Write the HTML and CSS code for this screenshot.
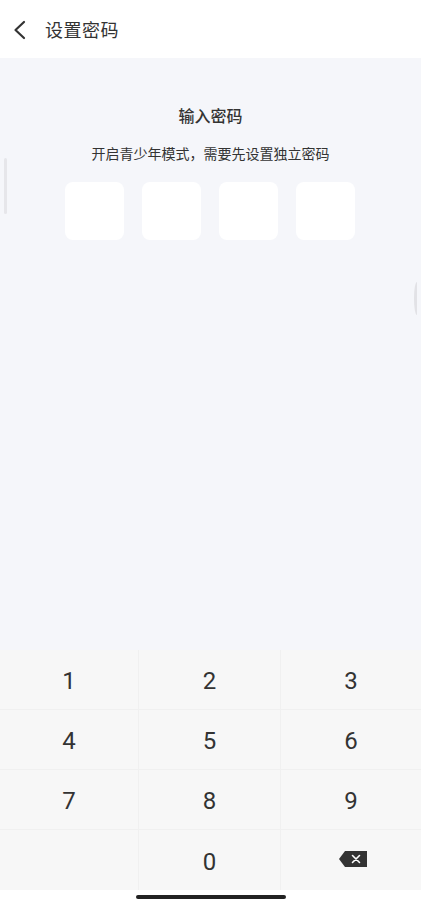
FILE: index.html
```html
<!DOCTYPE html>
<html lang="zh">
<head>
<meta charset="utf-8">
<link rel="stylesheet" href="styles.css">
</head>
<body>
<div class="page">
  <header class="topbar">
    <svg class="back" width="16" height="20" viewBox="0 0 16 20"><path d="M12 2 L3.5 10 L12 18" fill="none" stroke="#333" stroke-width="2.2" stroke-linecap="round" stroke-linejoin="round"/></svg>
    <span class="title">设置密码</span>
  </header>
  <main class="content">
    <h1 class="heading">输入密码</h1>
    <p class="sub">开启青少年模式，需要先设置独立密码</p>
    <div class="boxes">
      <div class="box"></div><div class="box"></div><div class="box"></div><div class="box"></div>
    </div>
    <div class="edge-left"></div>
    <div class="edge-right"></div>
  </main>
  <section class="keypad">
    <div class="key">1</div><div class="key">2</div><div class="key">3</div>
    <div class="key">4</div><div class="key">5</div><div class="key">6</div>
    <div class="key">7</div><div class="key">8</div><div class="key">9</div>
    <div class="key"></div><div class="key">0</div>
    <div class="key">
      <svg class="del" width="30" height="18" viewBox="0 0 30 18"><path d="M7 1 H29 V17 H7 L1 9 Z" fill="#333"/><path d="M14.5 5.5 L21.5 12.5 M21.5 5.5 L14.5 12.5" stroke="#fff" stroke-width="1.6" stroke-linecap="round"/></svg>
    </div>
  </section>
  <footer class="homebar"><div class="indicator"></div></footer>
</div>
</body>
</html>
```
FILE: styles.css
```css
html, body {
  margin: 0;
  padding: 0;
}
body {
  width: 421px;
  height: 900px;
  font-family: "Noto Sans CJK SC", "Noto Sans", sans-serif;
  color: #333;
  background: #f5f6fa;
}
.page {
  display: flex;
  flex-direction: column;
  height: 900px;
}
.topbar {
  height: 58px;
  background: #fff;
  display: flex;
  align-items: center;
  padding-left: 12px;
  box-sizing: border-box;
}
.back {
  margin-top: 1px;
}
.title {
  margin-left: 17px;
  font-size: 18px;
  color: #333;
  letter-spacing: 0.5px;
}
.content {
  position: relative;
  flex: 1;
  display: flex;
  flex-direction: column;
  align-items: center;
  background: #f5f6fa;
}
.heading {
  margin: 46px 0 0;
  font-size: 16px;
  font-weight: 500;
  line-height: 22px;
  color: #333;
}
.sub {
  margin: 17px 0 0;
  font-size: 14px;
  line-height: 20px;
  color: #333;
}
.boxes {
  display: flex;
  gap: 18px;
  margin-top: 19px;
  margin-right: 1px;
}
.box {
  width: 59px;
  height: 58px;
  border-radius: 8px;
  background: #fff;
}
.edge-left {
  position: absolute;
  left: 4px;
  top: 100px;
  width: 3px;
  height: 56px;
  border-radius: 2px;
  background: #e6e6ea;
}
.edge-right {
  position: absolute;
  right: 1px;
  top: 224px;
  width: 6px;
  height: 33px;
  border-left: 3px solid #e2e2e6;
  border-radius: 50% 0 0 50%;
  box-sizing: border-box;
}
.keypad {
  display: grid;
  grid-template-columns: 139px 142px 140px;
  grid-auto-rows: 60px;
  background: #f7f7f7;
}
.key {
  display: flex;
  align-items: center;
  justify-content: center;
  padding-top: 3px;
  font-family: Roboto, "Noto Sans", sans-serif;
  font-size: 24px;
  color: #333;
  border-right: 1px solid #f0f0f0;
  border-bottom: 1px solid #f0f0f0;
  box-sizing: border-box;
}
.key:nth-child(3n) {
  border-right: none;
}
.key:nth-child(n+10) {
  border-bottom: none;
}
.del {
  margin-left: 3px;
  margin-top: -5px;
}
.homebar {
  height: 10px;
  background: #fff;
  display: flex;
  justify-content: center;
  align-items: flex-start;
  padding-top: 5px;
  box-sizing: border-box;
}
.indicator {
  width: 150px;
  height: 4px;
  border-radius: 2px;
  background: #222;
}
```
